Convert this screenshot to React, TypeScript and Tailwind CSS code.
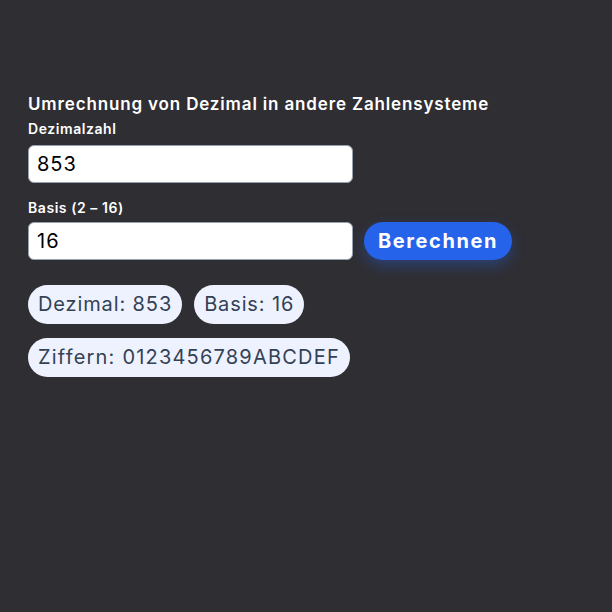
import React, { useState } from "react";

const font = { fontFamily: "Inter, 'Noto Sans', sans-serif" };

export default function App() {
  const [dec, setDec] = useState("853");
  const [base, setBase] = useState("16");
  const digits = "0123456789ABCDEF".slice(0, Number(base) || 16);

  return (
    <div className="min-h-[612px] w-full bg-[#2f2e33] pt-[93px] pl-[28px]" style={font}>
      <h1 className="text-[17px] font-semibold leading-[22px] tracking-[0.05em] text-white">
        Umrechnung von Dezimal in andere Zahlensysteme
      </h1>
      <label className="mt-[5px] block text-[14px] font-semibold leading-[18px] tracking-[0.04em] text-white">Dezimalzahl</label>
      <input
        value={dec}
        onChange={(e) => setDec(e.target.value)}
        className="mt-[7px] block h-[38px] w-[325px] rounded-[6px] border border-gray-400 bg-white px-[8px] text-[20px] tracking-[0.05em] text-black outline-none"
      />
      <label className="mt-[16px] block text-[14px] font-semibold leading-[18px] tracking-[0.04em] text-white">Basis (2 – 16)</label>
      <div className="mt-[5px] flex items-center gap-[11px]">
        <input
          value={base}
          onChange={(e) => setBase(e.target.value)}
          className="block h-[38px] w-[325px] rounded-[6px] border border-gray-400 bg-white px-[8px] text-[20px] tracking-[0.05em] text-black outline-none"
        />
        <button className="h-[38px] rounded-full bg-[#2563eb] px-[14px] text-[20px] font-bold tracking-[0.08em] text-white shadow-[0_6px_14px_rgba(37,99,235,0.35)]">
          Berechnen
        </button>
      </div>
      <div className="mt-[25px] flex flex-wrap gap-[12px] tracking-[0.055em]">
        <span className="rounded-full bg-[#eef2ff] px-[10px] py-[7px] text-[20px] leading-[25px] text-[#334155]">Dezimal: {dec}</span>
        <span className="rounded-full bg-[#eef2ff] px-[10px] py-[7px] text-[20px] leading-[25px] text-[#334155]">Basis: {base}</span>
      </div>
      <div className="mt-[14px] flex tracking-[0.075em]">
        <span className="rounded-full bg-[#eef2ff] px-[10px] py-[7px] text-[20px] leading-[25px] text-[#334155]">Ziffern: {digits}</span>
      </div>
    </div>
  );
}
